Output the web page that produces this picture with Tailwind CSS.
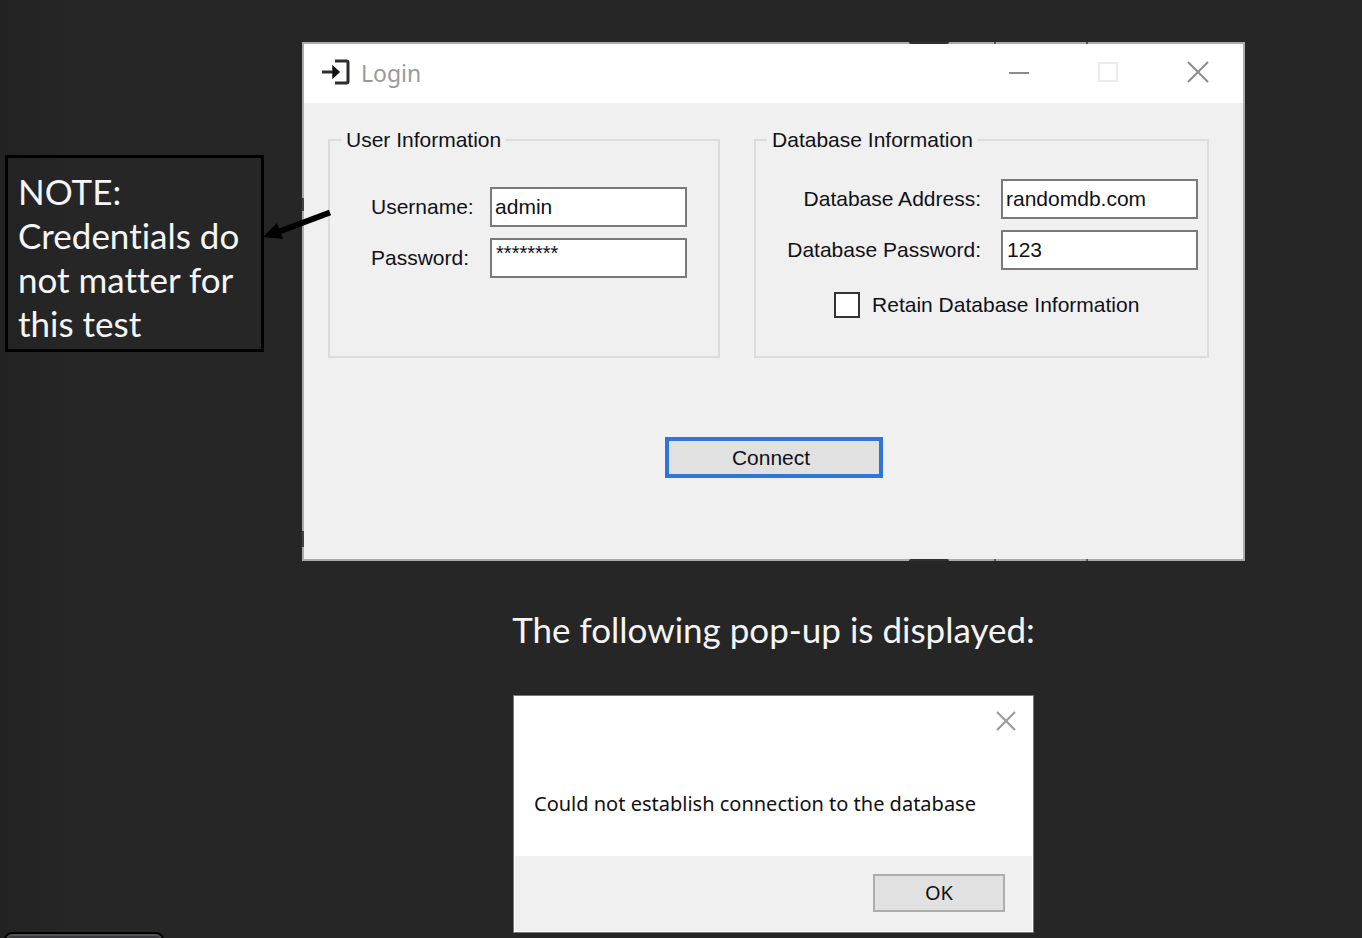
<!DOCTYPE html>
<html lang="en">
<head>
<meta charset="utf-8">
<meta name="viewport" content="width=device-width, initial-scale=1">
<title>Login test</title>
<script src="https://cdn.jsdelivr.net/npm/@tailwindcss/browser@4"></script>
</head>
<body class="bg-[#262626]">
<div class="relative flex min-h-screen items-start overflow-hidden bg-linear-to-r from-[#222222] to-[#262626] to-5% pr-[117px] pl-[5px]">

  <!-- Side note with its arrow -->
  <aside class="relative mt-[155px] w-[259px] shrink-0 border-[3px] border-black pt-[11px] pb-1 pl-[10px] font-['Lato',sans-serif] text-[35px] leading-[44px] text-[#f5f5f5] [font-variant-ligatures:none]">
    <p>NOTE:<br>Credentials do<br>not matter for<br>this test</p>
    <svg class="absolute top-[49px] left-[255px] z-10 h-[38px] w-[72px]" viewBox="0 0 72 38" aria-hidden="true">
      <path d="M67 5.500 15 25" stroke="#000" stroke-width="6"/>
      <path d="M0 30 14 16 20 32Z" fill="#000"/>
    </svg>
  </aside>

  <main class="ml-[38px] flex min-w-0 flex-1 flex-col items-center pt-[42px]">

    <!-- Login window -->
    <section class="relative w-full border-2 border-[#ababab] bg-[#f0f0f0] pb-[81px] font-['Liberation_Sans',sans-serif] text-[21px] leading-[26px] text-[#101018]">
      <span class="absolute -top-[2px] left-[605px] h-[2px] w-[40px] rounded-b-sm bg-[#303030]"></span>
      <span class="absolute -top-[2px] left-[690px] h-[2px] w-[2px] bg-[#555]"></span>
      <span class="absolute -top-[2px] left-[782px] h-[2px] w-[2px] bg-[#555]"></span>
      <span class="absolute -bottom-[2px] left-[605px] h-[2px] w-[40px] rounded-t-sm bg-[#303030]"></span>
      <span class="absolute -bottom-[2px] left-[690px] h-[2px] w-[2px] bg-[#555]"></span>
      <span class="absolute -bottom-[2px] left-[782px] h-[2px] w-[2px] bg-[#555]"></span>
      <span class="absolute top-[154px] -left-[2px] h-[13px] w-[2px] bg-[#444]"></span>
      <span class="absolute bottom-[12px] -left-[2px] h-[16px] w-[2px] bg-[#444]"></span>

      <header class="flex h-[59px] items-center bg-white pr-[34px] pb-[4px] pl-[17px]">
        <svg class="h-[28px] w-[30px]" viewBox="0 0 30 28" fill="none" stroke="#2c2c2c" aria-hidden="true">
          <path d="M14 3H25.500Q27 3 27 4.500V23.500Q27 25 25.500 25H14" stroke-width="3"/>
          <path d="M1 14H15" stroke-width="3"/>
          <path d="M12 8.500 18 14 12 19.500V14Z" fill="#111" stroke="#111" stroke-width="1.500"/>
        </svg>
        <h1 class="ml-[10px] pt-[2px] font-['Noto_Sans',sans-serif] text-[23px] text-[#999999]">Login</h1>
        <div class="ml-auto flex items-center gap-[68px]">
          <button type="button" aria-label="Minimize"><svg class="h-[22px] w-[20px]" viewBox="0 0 20 22"><path d="M0 12H20" stroke="#8c8c8c" stroke-width="2"/></svg></button>
          <button type="button" aria-label="Maximize" disabled><svg class="h-[22px] w-[22px]" viewBox="0 0 22 22"><path d="M2 2H20V20H2Z" fill="none" stroke="#ebebeb" stroke-width="2"/></svg></button>
          <button type="button" aria-label="Close"><svg class="h-[22px] w-[22px]" viewBox="0 0 22 22"><path d="M1 1 21 21M21 1 1 21" stroke="#8c8c8c" stroke-width="2"/></svg></button>
        </div>
      </header>

      <form onsubmit="return false">
        <div class="grid grid-cols-[393fr_456fr] gap-[34px] pt-[24px] pr-[34px] pl-[24px]">
          <fieldset class="min-w-0 border-2 border-[#dcdcdc] pr-[31px] pb-[78px] pl-[41px]">
            <legend class="-ml-[30px] px-[5px]">User Information</legend>
            <div class="grid grid-cols-[minmax(0,1fr)_197px] items-center gap-y-[11px] pt-[34px]">
              <label for="user">Username:</label>
              <input id="user" type="text" value="admin" class="h-[40px] w-full border-2 border-[#7a7a7a] bg-white px-[3px]">
              <label for="pass">Password:</label>
              <input id="pass" type="text" value="********" class="h-[40px] w-full border-2 border-[#7a7a7a] bg-white px-[4px] pb-[10px] text-[20px]">
            </div>
          </fieldset>
          <fieldset class="min-w-0 border-2 border-[#dcdcdc] pr-[9px] pl-[10px]">
            <legend class="ml-[1px] px-[5px]">Database Information</legend>
            <div class="grid grid-cols-[minmax(0,1fr)_197px] items-center gap-y-[11px] pt-[26px]">
              <label for="addr" class="pr-[20px] text-right">Database Address:</label>
              <input id="addr" type="text" value="randomdb.com" class="h-[40px] w-full border-2 border-[#7a7a7a] bg-white px-[3px]">
              <label for="dbpass" class="pr-[20px] text-right">Database Password:</label>
              <input id="dbpass" type="text" value="123" class="h-[40px] w-full border-2 border-[#7a7a7a] bg-white px-[4px]">
            </div>
            <div class="flex items-center gap-[12px] pt-[22px] pl-[68px]">
              <input id="retain" type="checkbox" class="size-[26px] appearance-none border-2 border-[#333] bg-white checked:bg-[#2e75d6]">
              <label for="retain">Retain Database Information</label>
            </div>
          </fieldset>
        </div>
        <div class="mt-[79px] flex justify-center">
          <button type="submit" class="h-[41px] w-[218px] border-4 border-[#2e75d6] bg-[#e1e1e1] pr-[5px]">Connect</button>
        </div>
      </form>
    </section>

    <p class="mt-[46px] font-['Lato',sans-serif] text-[35px] leading-[44px] text-[#f5f5f5]">The following pop-up is displayed:</p>

    <!-- Error pop-up -->
    <section role="alertdialog" aria-labelledby="msg" class="mt-[44px] flex w-[521px] flex-col border border-[#777] bg-white font-['Noto_Sans',sans-serif] text-[20px] leading-[28px] text-[#101010]">
      <div class="flex justify-end pt-[15px] pr-[17px]">
        <button type="button" aria-label="Close"><svg class="size-[20px]" viewBox="0 0 20 20"><path d="M1 1 19 19M19 1 1 19" stroke="#999" stroke-width="2"/></svg></button>
      </div>
      <p id="msg" class="pt-[59px] pb-[38px] pl-[20px] whitespace-nowrap">Could not establish connection to the database</p>
      <div class="m-[1px] mt-0 flex justify-end bg-[#f0f0f0] pt-[18px] pr-[27px] pb-[19px]">
        <button type="button" class="h-[38px] w-[132px] border-2 border-[#adadad] bg-[#e1e1e1]">OK</button>
      </div>
    </section>
  </main>

  <!-- Top edge of the panel that peeks in below -->
  <div class="absolute -bottom-[20px] left-[4px] h-[26px] w-[160px] rounded-lg border-2 border-black bg-[#3a383e] shadow-[inset_0_2px_0_#555]"></div>
</div>
</body>
</html>
